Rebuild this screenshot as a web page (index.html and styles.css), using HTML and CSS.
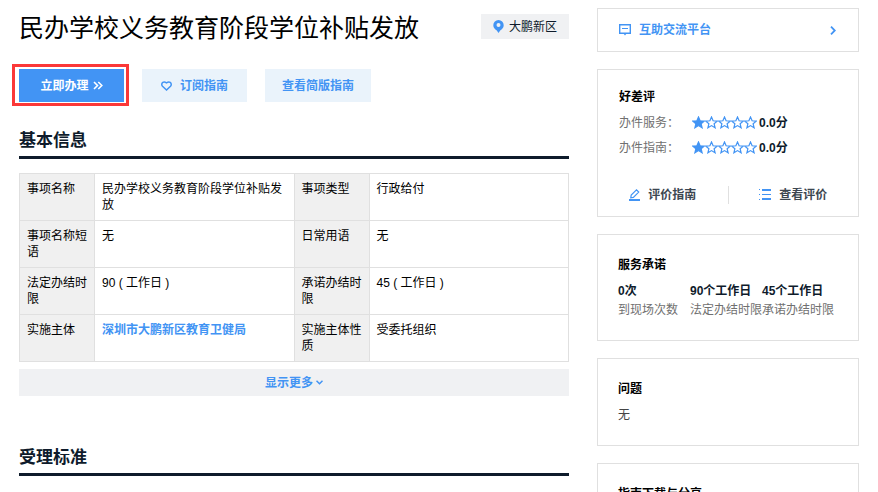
FILE: index.html
```html
<!DOCTYPE html>
<html lang="zh-CN">
<head>
    <meta charset="UTF-8">
    <meta name="viewport" content="width=device-width, initial-scale=1.0">
    <title>民办学校义务教育阶段学位补贴发放</title>
    <link rel="stylesheet" href="styles.css">
</head>
<body>
    <svg class="sprite" aria-hidden="true">
        <symbol id="star" viewBox="0 0 13 13">
            <path d="M6.5 1 L8.1 4.8 L12.2 5.1 L9.1 7.7 L10.1 11.8 L6.5 9.6 L2.9 11.8 L3.9 7.7 L0.8 5.1 L4.9 4.8 Z"/>
        </symbol>
    </svg>

    <div class="page">
        <main class="content">
            <header class="title-bar">
                <h1>民办学校义务教育阶段学位补贴发放</h1>
                <span class="region">
                    <svg width="11" height="13" viewBox="0 0 11 13"><path fill="#4294f4" fill-rule="evenodd" d="M5.5 0a5.2 5.2 0 0 1 5.2 5.2c0 2.5-1.6 3.9-3.5 5.3L5.5 13l-1.700-2.500C1.900 9.100.3 7.700.3 5.200A5.200 5.200 0 0 1 5.500 0zm0 3.100a2 2 0 1 0 0 4 2 2 0 0 0 0-4z"/></svg>
                    大鹏新区
                </span>
            </header>

            <div class="actions">
                <div class="highlight">
                    <button type="button" class="btn btn-primary">
                        立即办理
                        <svg width="10" height="9" viewBox="0 0 10 9" fill="none" stroke="#fff" stroke-width="1.600"><path d="M1 1l3.500 3.500L1 8M5.300 1l3.500 3.500L5.300 8"/></svg>
                    </button>
                </div>
                <button type="button" class="btn">
                    <svg class="heart" width="11" height="10" viewBox="0 0 11 10" fill="none" stroke="#4294f4" stroke-width="1.500"><path d="M5.500 9L1.500 5.200C.4 4 .6 2.200 1.800 1.300c.9-.5 2.500-.3 3.700.5 1.200-.8 2.800-1 3.700-.5 1.200.9 1.400 2.700.3 3.900z"/></svg>
                    订阅指南
                </button>
                <button type="button" class="btn">查看简版指南</button>
            </div>

            <section>
                <h2>基本信息</h2>
                <table class="info">
                    <tr>
                        <th scope="row">事项名称</th>
                        <td>民办学校义务教育阶段学位补贴发放</td>
                        <th scope="row">事项类型</th>
                        <td>行政给付</td>
                    </tr>
                    <tr>
                        <th scope="row">事项名称短语</th>
                        <td>无</td>
                        <th scope="row">日常用语</th>
                        <td>无</td>
                    </tr>
                    <tr>
                        <th scope="row">法定办结时限</th>
                        <td>90 ( 工作日 )</td>
                        <th scope="row">承诺办结时限</th>
                        <td>45 ( 工作日 )</td>
                    </tr>
                    <tr>
                        <th scope="row">实施主体</th>
                        <td><a href="#">深圳市大鹏新区教育卫健局</a></td>
                        <th scope="row">实施主体性质</th>
                        <td>受委托组织</td>
                    </tr>
                </table>
                <button type="button" class="more">
                    显示更多
                    <svg width="7" height="5" viewBox="0 0 7 5" fill="none" stroke="#4294f4" stroke-width="1.500"><path d="M.5.700l3 3 3-3"/></svg>
                </button>
            </section>

            <section>
                <h2>受理标准</h2>
            </section>
        </main>

        <aside class="sidebar">
            <a class="card platform" href="#">
                <svg width="12" height="12" viewBox="0 0 12 12" fill="none" stroke="#4294f4"><path stroke-width="1.400" d="M.7.700h10.600v8.600H.7z"/><path d="M3 4.500h6"/><path fill="#4294f4" stroke="none" d="M4 9h4l-2 2.500z"/></svg>
                互助交流平台
                <svg class="arrow" width="6" height="9" viewBox="0 0 6 9" fill="none" stroke="#4294f4" stroke-width="1.800"><path d="M1 .700l3.800 3.800L1 8.300"/></svg>
            </a>

            <section class="card rating">
                <h3>好差评</h3>
                <div class="rate-row">
                    <span class="rate-label">办件服务：</span>
                    <span class="stars">
                        <svg class="on"><use href="#star"/></svg><svg><use href="#star"/></svg><svg><use href="#star"/></svg><svg><use href="#star"/></svg><svg><use href="#star"/></svg>
                    </span>
                    <b>0.0分</b>
                </div>
                <div class="rate-row">
                    <span class="rate-label">办件指南：</span>
                    <span class="stars">
                        <svg class="on"><use href="#star"/></svg><svg><use href="#star"/></svg><svg><use href="#star"/></svg><svg><use href="#star"/></svg><svg><use href="#star"/></svg>
                    </span>
                    <b>0.0分</b>
                </div>
                <div class="rate-links">
                    <a href="#">
                        <svg width="12" height="12" viewBox="0 0 12 12" fill="none" stroke="#4294f4"><path stroke-width="1.200" d="M1.800 8.700l.4-2.600L7.500.9l2.200 2.200-5.300 5.300z"/><path stroke-width="2" d="M0 11h11"/></svg>
                        评价指南
                    </a>
                    <a href="#">
                        <svg width="13" height="12" viewBox="0 0 13 12" fill="#4294f4"><path d="M3 0h9v2H3zM3 5h9v1H3zM3 9h9v2H3zM0 0h1v1H0zM0 5h1v1H0zM0 10h1v1H0z"/></svg>
                        查看评价
                    </a>
                </div>
            </section>

            <section class="card">
                <h3>服务承诺</h3>
                <dl class="promise">
                    <div><dt>0次</dt><dd>到现场次数</dd></div>
                    <div><dt>90个工作日</dt><dd>法定办结时限</dd></div>
                    <div><dt>45个工作日</dt><dd>承诺办结时限</dd></div>
                </dl>
            </section>

            <section class="card">
                <h3>问题</h3>
                <p>无</p>
            </section>

            <section class="card">
                <h3>指南下载与分享</h3>
            </section>
        </aside>
    </div>
</body>
</html>
```
FILE: styles.css
```css
* {
    box-sizing: border-box;
}

body {
    margin: 0;
    font-family: "Liberation Sans", "Noto Sans CJK SC", sans-serif;
    font-size: 12px;
    line-height: 16px;
    color: #000;
    background-color: #fff;
}

h1, h2, h3, p, dl, dd {
    margin: 0;
}

a {
    color: #4294f4;
    text-decoration: none;
}

button {
    font: inherit;
    border: none;
    cursor: pointer;
}

svg {
    flex: none;
}

.sprite {
    display: none;
}

.page {
    display: flex;
    align-items: flex-start;
    gap: 28px;
    padding: 8px 19px 0;
}

.content {
    flex: 1;
}

.title-bar {
    display: flex;
    justify-content: space-between;
    align-items: flex-start;
    padding-top: 6px;
}

h1 {
    font-size: 25px;
    font-weight: normal;
    line-height: 28px;
}

.region {
    display: flex;
    align-items: center;
    gap: 5px;
    height: 25px;
    padding: 0 12px;
    color: #0e1b2b;
    background-color: #f0f1f3;
}

.actions {
    display: flex;
    gap: 18px;
    margin: 27px 0 26px;
}

.btn {
    display: flex;
    align-items: center;
    justify-content: center;
    gap: 4px;
    height: 33px;
    min-width: 105px;
    padding: 0 17px;
    font-weight: bold;
    color: #4294f4;
    background-color: #eaf3fb;
}

.btn-primary {
    color: #fff;
    background-color: #4294f4;
}

.heart {
    margin-right: 4px;
}

.highlight {
    position: relative;
}

/* red frame around the apply button */
.highlight::after {
    content: "";
    position: absolute;
    inset: -5px -5px -4px -7px;
    border: 3px solid #fb3838;
    pointer-events: none;
}

h2 {
    padding-bottom: 3px;
    border-bottom: 3px solid #0e1b2b;
    margin-bottom: 14px;
    font-size: 17px;
    line-height: 25px;
    color: #0e1b2b;
}

.info {
    width: 100%;
    table-layout: fixed;
    border-collapse: collapse;
}

.info th, .info td {
    height: 47px;
    padding: 7px;
    border: 1px solid #e0e0e0;
    text-align: left;
    vertical-align: top;
    font-weight: normal;
}

.info th {
    width: 75px;
    background-color: #f0f0f0;
}

.info a {
    font-weight: bold;
}

.more {
    display: flex;
    align-items: center;
    justify-content: center;
    gap: 3px;
    width: 100%;
    height: 27px;
    margin: 7px 0 49px;
    font-weight: bold;
    color: #4294f4;
    background-color: #f0f1f3;
}

.sidebar {
    display: flex;
    flex-direction: column;
    gap: 17px;
    width: 262px;
}

.card {
    padding: 22px 20px 20px;
    border: 1px solid #e0e0e0;
}

.card h3 {
    margin-bottom: 9px;
    font-size: 12px;
    line-height: 16px;
}

.card p {
    line-height: 19px;
    color: #444;
}

.platform {
    display: flex;
    align-items: center;
    gap: 8px;
    height: 44px;
    padding: 0 22px 0 21px;
    font-weight: bold;
}

.arrow {
    margin-left: auto;
}

.rating {
    padding: 19px 21px 12px;
}

.card.rating h3 {
    margin-bottom: 5px;
}

.rate-row {
    display: flex;
    align-items: center;
    height: 25px;
}

.rate-label {
    width: 73px;
    color: #707070;
}

.stars {
    display: flex;
    margin-right: 2px;
}

.stars svg {
    width: 13px;
    height: 13px;
    fill: none;
    stroke: #4294f4;
    stroke-width: 1.2;
}

.stars .on {
    fill: #4294f4;
}

.rate-row b {
    color: #0e1b2b;
}

.rate-links {
    display: flex;
    margin: 26px -21px 0;
}

.rate-links a {
    flex: 1;
    display: flex;
    align-items: center;
    justify-content: center;
    gap: 7px;
    height: 18px;
    font-weight: bold;
    color: #3c4650;
}

.rate-links a + a {
    border-left: 1px solid #e0e0e0;
}

.promise {
    display: grid;
    grid-template-columns: repeat(3, 72px);
    white-space: nowrap;
}

.promise dt {
    font-weight: bold;
    line-height: 19px;
    color: #0e1b2b;
}

.promise dd {
    line-height: 19px;
    color: #707070;
}
```
